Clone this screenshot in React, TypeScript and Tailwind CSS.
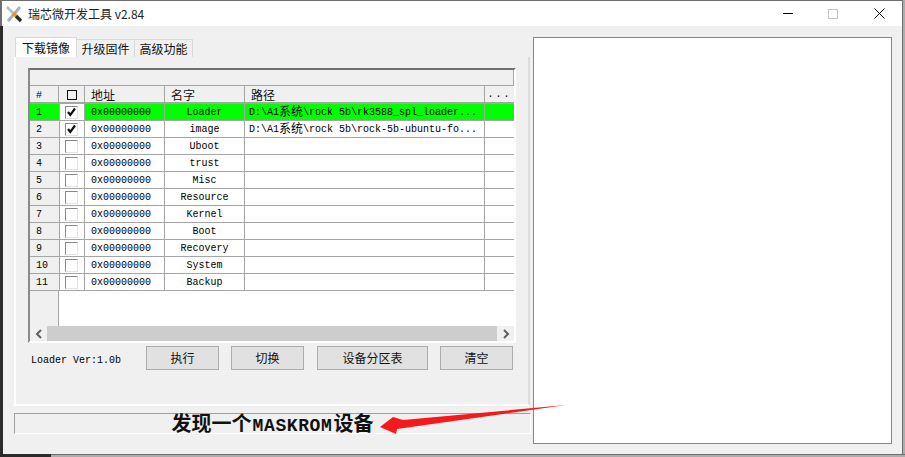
const rows = [
  ["1", true, "Loader", "rk3588_spl_loader..."],
  ["2", true, "image", "rock-5b-ubuntu-fo..."],
  ["3", false, "Uboot", ""],
  ["4", false, "trust", ""],
  ["5", false, "Misc", ""],
  ["6", false, "Resource", ""],
  ["7", false, "Kernel", ""],
  ["8", false, "Boot", ""],
  ["9", false, "Recovery", ""],
  ["10", false, "System", ""],
  ["11", false, "Backup", ""],
] as const;

const mono = "font-['Liberation_Mono','Noto_Sans_CJK_SC',monospace] text-[10px] text-black";
const ui = "font-['Noto_Sans_CJK_SC','Liberation_Sans',sans-serif] text-[12px] text-[#111]";

function Head({ w, children, center }: { w: string; children?: React.ReactNode; center?: boolean }) {
  return (
    <div className={`${w} shrink-0 h-full flex items-center pt-[2px] border-r border-[#a5a5a5] ${center ? "justify-center" : "pl-[6px]"} ${ui}`}>
      {children}
    </div>
  );
}

function Row({ n, checked, name, path }: { n: string; checked: boolean; name: string; path: string }) {
  const sel = n === "1";
  return (
    <div className={`flex h-[17px] ${mono} ${sel ? "bg-[#00ff00]" : "bg-white"}`}>
      <div className={`w-[29px] shrink-0 h-full pl-[6px] flex items-center border-b border-[#a5a5a5] ${sel ? "" : "bg-[#f0f0f0]"}`}>{n}</div>
      <div className="w-[26px] shrink-0 h-full flex items-center justify-center border-l border-r border-b border-[#a5a5a5] bg-white">
        <div className="w-[13px] h-[13px] -translate-x-px border-t border-l border-[#8a8a8a] border-r border-b border-r-[#e3e3e3] border-b-[#e3e3e3] bg-white flex items-center justify-center">
          {checked && (
            <svg width="11" height="11" viewBox="0 0 11 11">
              <path d="M2 5 L4.3 8 L9 1.5" fill="none" stroke="#111" strokeWidth="2.2" />
            </svg>
          )}
        </div>
      </div>
      <div className="w-[80px] shrink-0 h-full pl-[6px] flex items-center border-r border-b border-[#a5a5a5]">0x00000000</div>
      <div className="w-[80px] shrink-0 h-full flex items-center justify-center border-r border-b border-[#a5a5a5]">{name}</div>
      <div className="w-[240px] shrink-0 h-full pl-[4px] flex items-center border-r border-b border-[#a5a5a5] whitespace-pre overflow-hidden">
        {path && (
          <span>
            D:\A1<span className="text-[12px] leading-none align-[-1px]">系统</span>\rock 5b\{path}
          </span>
        )}
      </div>
      <div className="flex-1 h-full border-b border-[#a5a5a5]" />
    </div>
  );
}

function Btn({ w, children }: { w: string; children: React.ReactNode }) {
  return (
    <div className={`${w} h-[24px] shrink-0 flex items-center justify-center bg-[#e1e1e1] border border-[#adadad] ${ui}`}>{children}</div>
  );
}

export default function App() {
  return (
    <div className="relative w-[905px] h-[457px] overflow-hidden bg-[#adadad] flex flex-col">
      <div className="w-[903px] h-[454px] shrink-0 flex flex-col border-t border-r border-[#6e6e6e] bg-[#6e6e6e]">
        <div className="h-[25px] bg-white shrink-0 flex items-center ml-[2px]">
          <svg width="18" height="18" viewBox="0 0 18 18" className="ml-[3px]">
            <path d="M15 2 L3 16" stroke="#a9b2bc" strokeWidth="3" />
            <path d="M2 2 L8 8" stroke="#b4bcc4" strokeWidth="2.5" />
            <path d="M8 8 L11 11" stroke="#d99a2b" strokeWidth="3.5" />
            <path d="M11 11 L16 16" stroke="#2b2b2b" strokeWidth="3.5" />
          </svg>
          <span className="ml-[5px] font-['Noto_Sans_CJK_SC','Liberation_Sans',sans-serif] text-[12px] text-[#222]">瑞芯微开发工具 v2.84</span>
          <div className="ml-auto flex items-center mr-[17px]">
            <div className="w-[10px] h-px bg-black" />
            <div className="ml-[35px] w-[10px] h-[10px] border border-[#c4c4c4]" />
            <svg width="11" height="11" viewBox="0 0 11 11" className="ml-[36px]">
              <path d="M0.5 0.5 L10.5 10.5 M10.5 0.5 L0.5 10.5" stroke="#111" strokeWidth="1" />
            </svg>
          </div>
        </div>

        <div className="flex-1 flex min-h-0 bg-[#2b2b2b] pl-[3px]">
          <div className="flex-1 flex bg-[#f0f0f0] min-h-0">
            <div className="w-[528px] shrink-0 pl-[11px] flex flex-col">
              <div className="h-[11px] shrink-0" />
              <div className="flex items-end h-[20px] shrink-0 pl-px">
                <div className={`w-[62px] h-[20px] bg-white border-t border-x border-[#d9d9d9] flex items-center justify-center ${ui}`}>下载镜像</div>
                <div className={`w-[58px] h-[18px] border-t border-r border-[#d9d9d9] flex items-center justify-center ${ui}`}>升级固件</div>
                <div className={`w-[58px] h-[18px] border-t border-r border-[#d9d9d9] flex items-center justify-center ${ui}`}>高级功能</div>
              </div>
              <div className="h-[349px] mr-px shrink-0 border-x-2 border-b-2 border-white bg-[#f0f0f0] pt-[11px] pl-[12px] border-r-[#dcdcdc]">
                <div className="w-[488px] h-[275px] border-t-2 border-l-2 border-t-[#6e6e6e] border-l-[#8a8a8a] border-r-2 border-b-2 border-r-white border-b-white flex flex-col bg-white">
                  <div className="h-[16px] shrink-0 bg-[#f0f0f0] border-b border-r border-[#a5a5a5]" />
                  <div className="h-[18px] shrink-0 flex bg-[#f0f0f0] border-b-2 border-[#a5a5a5]">
                    <Head w="w-[29px]">
                      <span className={mono}>#</span>
                    </Head>
                    <Head w="w-[26px]" center>
                      <div className="w-[10px] h-[10px] border border-[#111]" />
                    </Head>
                    <Head w="w-[80px]">地址</Head>
                    <Head w="w-[80px]">名字</Head>
                    <Head w="w-[240px]">路径</Head>
                    <div className={`flex-1 flex justify-center items-end tracking-[2px] leading-[14px] ${mono}`}>...</div>
                  </div>
                  {rows.map((r) => (
                    <Row key={r[0]} n={r[0]} checked={r[1]} name={r[2]} path={r[3]} />
                  ))}
                  <div className="flex-1 flex min-h-0">
                    <div className="w-[29px] bg-[#f0f0f0] border-r border-[#a5a5a5]" />
                    <div className="flex-1 bg-white" />
                  </div>
                  <div className="h-[15px] shrink-0 flex items-center bg-[#f0f0f0]">
                    <div className="w-[17px] flex justify-center">
                      <svg width="8" height="10" viewBox="0 0 8 10">
                        <path d="M6 1 L2 5 L6 9" fill="none" stroke="#606060" strokeWidth="2" />
                      </svg>
                    </div>
                    <div className="w-[450px] h-full bg-[#cdcdcd]" />
                    <div className="flex-1 flex justify-center">
                      <svg width="8" height="10" viewBox="0 0 8 10">
                        <path d="M2 1 L6 5 L2 9" fill="none" stroke="#606060" strokeWidth="2" />
                      </svg>
                    </div>
                  </div>
                </div>
                <div className="flex items-center h-[24px] mt-[3px]">
                  <div className={`w-[118px] pl-[3px] pt-[4px] shrink-0 ${mono} whitespace-nowrap`}>Loader Ver:1.0b</div>
                  <Btn w="w-[73px]">执行</Btn>
                  <Btn w="w-[73px] ml-[12px]">切换</Btn>
                  <Btn w="w-[111px] ml-[13px]">设备分区表</Btn>
                  <Btn w="w-[73px] ml-[12px]">清空</Btn>
                </div>
              </div>
              <div className="h-[7px] shrink-0" />
              <div className="w-[517px] h-[21px] shrink-0 border-t border-l border-[#a0a0a0] border-r border-b border-r-white border-b-white flex items-center justify-center overflow-visible">
                <span className="flex items-baseline whitespace-nowrap leading-none text-[#111] font-bold">
                  <span className="text-[20px] font-['Noto_Sans_CJK_SC',serif] font-semibold">发现一个</span>
                  <span className="text-[18px] tracking-[0.6px] mx-[1px] font-['Liberation_Mono',monospace]">MASKROM</span>
                  <span className="text-[20px] font-['Noto_Sans_CJK_SC',serif] font-semibold">设备</span>
                </span>
              </div>
            </div>
            <div className="w-[359px] h-[407px] mt-[11px] ml-[2px] shrink-0 bg-white border border-[#86868b]" />
          </div>
        </div>
      </div>
      <div className="h-[3px] shrink-0 flex">
        <div className="w-[51px] h-full bg-[#2b2b2b]" />
        <div className="flex-1 h-full border-t border-[#6e6e6e]" />
      </div>

      <svg width="200" height="40" viewBox="0 0 200 40" className="absolute left-[378px] top-[400px]">
        <path d="M188 5 L25 20 L15 17 L2 27 L18 34 L19 29 Z" fill="#f5191c" />
      </svg>
    </div>
  );
}
